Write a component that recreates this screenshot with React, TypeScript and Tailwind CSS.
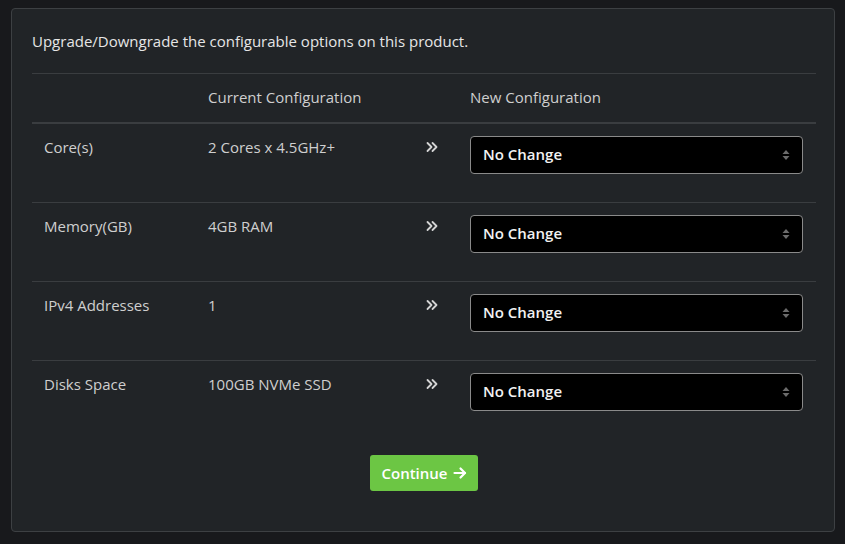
import React from "react";

const rows = [
  { label: "Core(s)", current: "2 Cores x 4.5GHz+" },
  { label: "Memory(GB)", current: "4GB RAM" },
  { label: "IPv4 Addresses", current: "1" },
  { label: "Disks Space", current: "100GB NVMe SSD" },
];

function Chevrons() {
  return (
    <svg width="14" height="14" viewBox="0 0 14 14" fill="none" stroke="#d4d4d4" strokeWidth="1.8" strokeLinecap="round" strokeLinejoin="round">
      <path d="M2.5 3 L6.5 7 L2.5 11" />
      <path d="M7.5 3 L11.5 7 L7.5 11" />
    </svg>
  );
}

function SelectBox() {
  return (
    <div className="flex h-[38px] w-[333px] items-center justify-between rounded-[4px] border border-[#8a8a8a] bg-black pl-[12px] pr-[12px] pb-[1px]">
      <span className="text-[15px] font-semibold text-[#f2f2f2]">No Change</span>
      <svg width="8" height="12" viewBox="0 0 8 12" fill="#6b6b6b">
        <path d="M4 1 L7.5 5 L0.5 5 Z" />
        <path d="M4 11 L7.5 7 L0.5 7 Z" />
      </svg>
    </div>
  );
}

export default function App() {
  return (
    <div
      className="min-h-[544px] w-full bg-[#18191c] pt-[8px] pl-[11px] pr-[10px] pb-[12px]"
      style={{ fontFamily: "'Open Sans', Lato, Arial, sans-serif" }}
    >
      <div className="h-[524px] rounded-[4px] border border-[#3d4043] bg-[#212427] pl-[20px] pr-[18px] pt-[21px]">
        <p className="text-[15px] leading-[22px] text-[#e6e6e6]">
          Upgrade/Downgrade the configurable options on this product.
        </p>
        <div className="mt-[21px] border-t border-[#3a3d40]">
          <div className="grid h-[50px] grid-cols-[164px_214px_48px_1fr] items-center border-b-2 border-[#3a3d40] pb-[2px] text-[15px] text-[#cfcfcf]">
            <div className="px-[12px]"></div>
            <div className="px-[12px]">Current Configuration</div>
            <div></div>
            <div className="px-[12px]">New Configuration</div>
          </div>
          {rows.map((r, i) => (
            <div
              key={r.label}
              className={
                "grid h-[79px] grid-cols-[164px_214px_48px_1fr] items-start text-[15px] text-[#cfcfcf] " +
                (i < rows.length - 1 ? "border-b border-[#3a3d40]" : "")
              }
            >
              <div className="px-[12px] pt-[12px] leading-[22px]">{r.label}</div>
              <div className="px-[12px] pt-[12px] leading-[22px]">{r.current}</div>
              <div className="flex pt-[16px] pl-[15px]">
                <Chevrons />
              </div>
              <div className="px-[12px] pt-[12px]">
                <SelectBox />
              </div>
            </div>
          ))}
        </div>
        <div className="mt-[15px] flex justify-center">
          <button className="flex h-[36px] items-center gap-[5px] rounded-[3px] bg-[#6cc644] px-[11px] text-[15px] font-semibold text-white">
            Continue
            <svg width="14" height="14" viewBox="0 0 14 14" fill="none" stroke="white" strokeWidth="2.2" strokeLinecap="round" strokeLinejoin="round">
              <path d="M1.5 7 H12" />
              <path d="M7.5 2.5 L12 7 L7.5 11.5" />
            </svg>
          </button>
        </div>
      </div>
    </div>
  );
}
